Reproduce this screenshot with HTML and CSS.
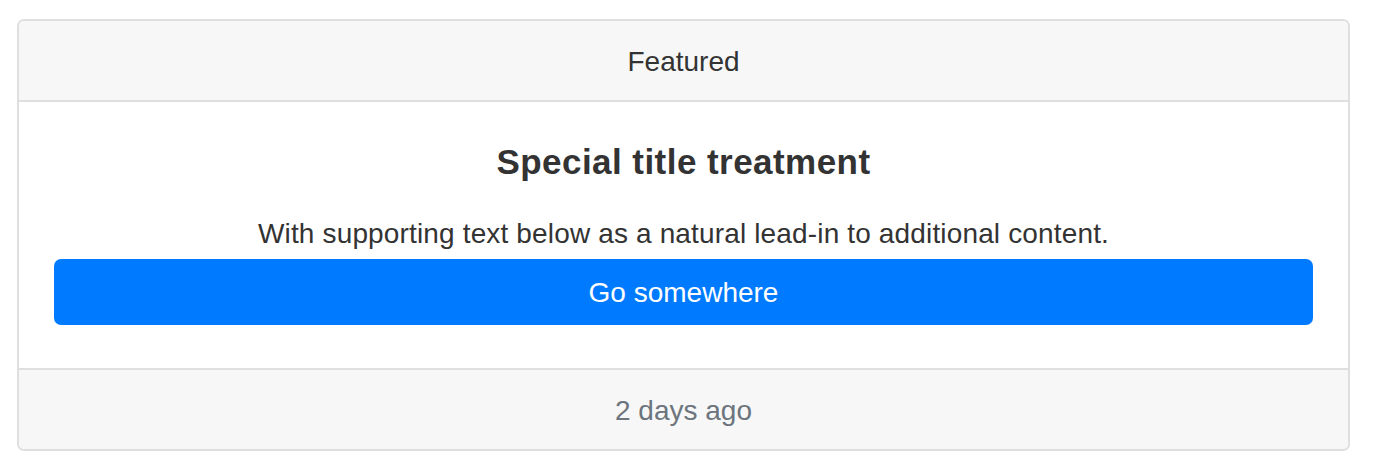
FILE: index.html
```html
<!DOCTYPE html>
<html lang="en">
<head>
<meta charset="utf-8">
<title>Card</title>
<link rel="stylesheet" href="styles.css">
</head>
<body>
<div class="card">
  <div class="card-header">Featured</div>
  <div class="card-body">
    <h5 class="card-title">Special title treatment</h5>
    <p class="card-text">With supporting text below as a natural lead-in to additional content.</p>
    <a href="#" class="btn">Go somewhere</a>
  </div>
  <div class="card-footer">2 days ago</div>
</div>
</body>
</html>
```
FILE: styles.css
```css
html, body {
  margin: 0;
  padding: 0;
  background: #fff;
}
body {
  font-family: "Liberation Sans", Arial, Helvetica, sans-serif;
  font-size: 28px;
  line-height: 42px;
  color: #333;
}
.card {
  margin: 19px 30px 0 17px;
  border: 2px solid #dfdfdf;
  border-radius: 7px;
  text-align: center;
  overflow: hidden;
}
.card-header {
  background: #f7f7f7;
  padding: 20px 35px 17px;
  border-bottom: 2px solid #dfdfdf;
}
.card-body {
  padding: 39px 35px 43px;
  display: flex;
  flex-direction: column;
}
.card-title {
  margin: 0 0 30px;
  font-size: 35px;
  line-height: 42px;
  font-weight: 700;
  letter-spacing: 0.45px;
}
.card-text {
  margin: 0 0 4px;
  letter-spacing: 0.15px;
}
.btn {
  display: block;
  background: #007bff;
  color: #fff;
  text-decoration: none;
  padding: 13px 20px 11px;
  border-radius: 7px;
  line-height: 42px;
}
.card-footer {
  background: #f7f7f7;
  padding: 20px 35px 17px;
  border-top: 2px solid #dfdfdf;
  color: #6c757d;
}
```
